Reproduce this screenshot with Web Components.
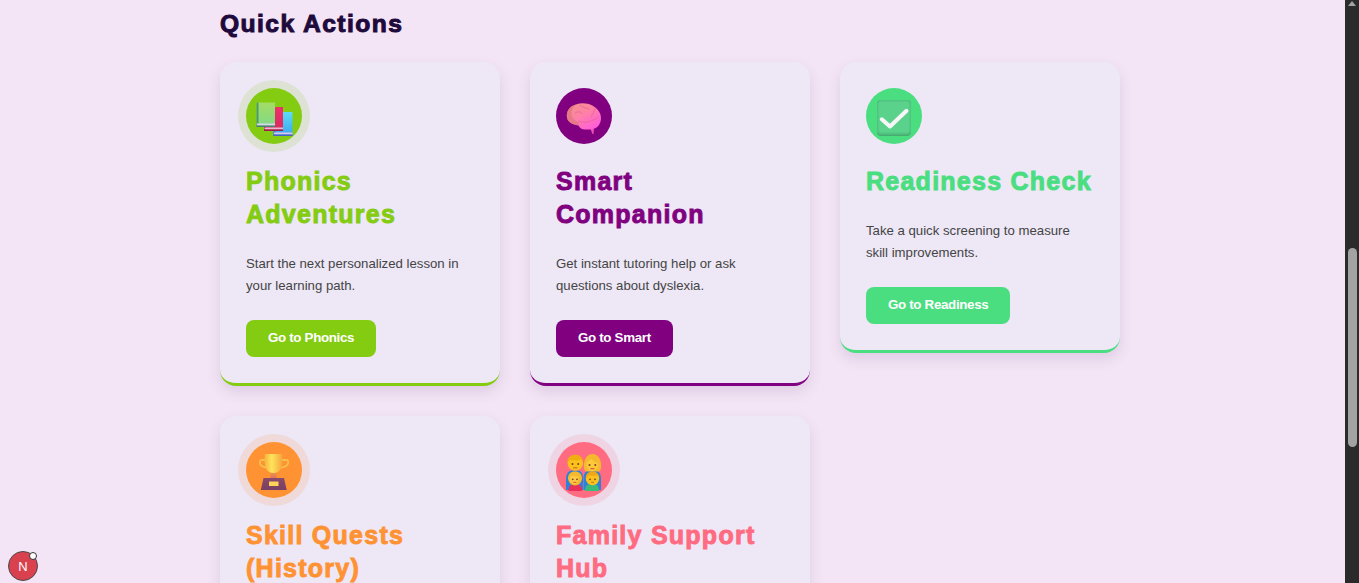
<!DOCTYPE html>
<html lang="en"><head><meta charset="utf-8"><title>Quick Actions</title>
<style>
html,body{margin:0;height:583px;overflow:hidden;background:#f3e5f5;font-family:"Liberation Sans",Arial,sans-serif}
</style></head><body>
<qa-app>
  <qa-section heading="Quick Actions">
    <qa-card color="#84cc12" halo title-text="Phonics Adventures" button="Go to Phonics" desc="Start the next personalized lesson in your learning path.">
      <svg slot="icon" viewBox="0 0 56 56" width="56" height="56">
        <defs>
          <linearGradient id="g1" x1="0" y1="0" x2="0" y2="1"><stop offset="0" stop-color="#a4dc64"/><stop offset="1" stop-color="#7fd98a"/></linearGradient>
          <linearGradient id="g2" x1="0" y1="0" x2="0" y2="1"><stop offset="0" stop-color="#f02f6d"/><stop offset="1" stop-color="#d82a5c"/></linearGradient>
          <linearGradient id="g3" x1="0" y1="0" x2="0" y2="1"><stop offset="0" stop-color="#5bdcf5"/><stop offset="1" stop-color="#3ba4f0"/></linearGradient>
        </defs>
        <rect x="27.500" y="24" width="19" height="24" fill="url(#g3)"/><rect x="27.500" y="24" width="2" height="24" fill="#3f7fd0"/><rect x="28" y="44.500" width="18.500" height="2" fill="#d9c8ee"/><rect x="27.500" y="46.500" width="19" height="1.500" fill="#4a62c0"/>
        <rect x="18" y="19" width="19" height="24" fill="url(#g2)"/><rect x="18" y="19" width="2" height="24" fill="#a82050"/><rect x="18.500" y="39.500" width="18.500" height="2" fill="#e8b8d0"/><rect x="18" y="41.500" width="19" height="1.500" fill="#a01c48"/>
        <rect x="10.500" y="14.500" width="18.500" height="24.500" fill="url(#g1)"/><rect x="10.500" y="14.500" width="2" height="24.500" fill="#4e9a66"/><rect x="11" y="35.500" width="18" height="2" fill="#d8d8ec"/><rect x="10.500" y="37.500" width="18.500" height="1.500" fill="#4c7f72"/>
      </svg>
    </qa-card>
    <qa-card color="#800080" title-text="Smart Companion" button="Go to Smart" desc="Get instant tutoring help or ask questions about dyslexia.">
      <svg slot="icon" viewBox="0 0 56 56" width="56" height="56">
        <defs><linearGradient id="b1" x1=".1" y1=".1" x2=".75" y2="1"><stop offset="0" stop-color="#f5908f"/><stop offset=".45" stop-color="#ff80a8"/><stop offset="1" stop-color="#ff5cdc"/></linearGradient></defs>
        <path d="M34.500 41h3.500l-.6 5.500-1.200-1.300z" fill="#f050b8"/>
        <path d="M10.800 28c0-6.500 4-10 9-11.500 5-1.700 11.500-1.700 16.500 1 5.500 3 8.700 7.500 8.700 12.500 0 6-3.500 10-8 11-2.800 .6-5.500 .5-8 .5-3.500 0-5-1.200-6.500-4-5.500-1-11.700-3.500-11.700-9.500z" fill="url(#b1)"/>
        <path d="M10.800 28c0-6.500 4-10 9-11.500-3 2.500-4.500 6-4.200 9.500 .3 3.700 3 6.500 6.900 8 1 .5-.2 2.200-.2 3.500-5.500-1-11.500-3.500-11.500-9.500z" fill="#e0787f" opacity=".8"/>
        <g fill="none" stroke="#e0608e" stroke-width=".8" stroke-linecap="round" opacity=".75">
          <path d="M24 17.500c3 2.500 6 2 9 3.500M39 20.500c-1 4-3 5.500-3.500 8.500M19 25c3-2 6-1.500 7.500 .5M23 33c4 2 9 1.500 12-.5 3-.5 5-1 7-3.500"/>
        </g>
      </svg>
    </qa-card>
    <qa-card color="#4ade80" title-text="Readiness Check" button="Go to Readiness" desc="Take a quick screening to measure skill improvements.">
      <svg slot="icon" viewBox="0 0 56 56" width="56" height="56">
        <rect x="11" y="12" width="34" height="36" rx="4" fill="#46ac70"/>
        <rect x="11" y="12" width="34" height="34.500" rx="4" fill="#52c481"/>
        <rect x="12.500" y="13.500" width="31" height="31" rx="3" fill="#5bd28b"/>
        <path d="M15.800 31.300L24 38.500 40.500 22.800" fill="none" stroke="#f7f7f7" stroke-width="4" stroke-linecap="round" stroke-linejoin="round"/>
      </svg>
    </qa-card>
    <qa-card color="#ff9233" halo clip title-text="Skill Quests (History)" button="" desc="">
      <svg slot="icon" viewBox="0 0 56 56" width="56" height="56">
        <defs>
          <linearGradient id="t1" x1="0" y1="0" x2="1" y2="0"><stop offset="0" stop-color="#f7b23e"/><stop offset=".4" stop-color="#ffe45c"/><stop offset="1" stop-color="#f5a53c"/></linearGradient>
          <linearGradient id="t2" x1="0" y1="0" x2="0" y2="1"><stop offset="0" stop-color="#f0a63e"/><stop offset="1" stop-color="#e2705a"/></linearGradient>
          <linearGradient id="t3" x1="0" y1="0" x2="0" y2="1"><stop offset="0" stop-color="#8a4a6a"/><stop offset="1" stop-color="#7a3f63"/></linearGradient>
        </defs>
        <path d="M20 18h-3.500c-2.500-.3-3 1.500-2.500 3.500 .6 2.200 3 3.500 6.500 4M35 18h4c2.800-.6 3.600 1 3 3.500-.6 2.200-3 3.500-7 4" fill="none" stroke="#f8c24a" stroke-width="1.800"/>
        <path d="M25 28h5l.8 8.500h-6.600z" fill="url(#t2)"/>
        <path d="M18.800 12h17.400c.6 6 .4 10.500-1 14-1.400 3.300-4.600 5-7.700 5s-6.300-1.700-7.700-5c-1.400-3.500-1.600-8-1-14z" fill="url(#t1)"/>
        <path d="M17.500 36h20.500l2.700 12H14.800z" fill="url(#t3)"/>
        <rect x="23" y="39.500" width="9.500" height="4.500" fill="#ffd25a"/>
      </svg>
    </qa-card>
    <qa-card color="#ff6b81" halo clip title-text="Family Support Hub" button="" desc="">
      <svg slot="icon" viewBox="0 0 56 56" width="56" height="56">
        <path d="M10 48v-11c0-5 2-8 6-8.500h6c3.500 .5 5 3 5 8v11.500z" fill="#2f80d8"/>
        <path d="M27.500 48v-11.500c0-5 2-7.500 5.500-8h6.500c3.500 .5 5.500 3.500 5.500 8.500v11z" fill="#2f80d8"/>
        <circle cx="19.300" cy="21" r="7.800" fill="#fcc21b"/>
        <path d="M11.500 21c-.5-5 3-8.500 8-8.300 4.500 0 8 3.300 7.500 8.300-.8-2-1.500-3-2.500-3.500-3 1-7 1-10 .5-1.500 .5-2.500 1.500-3 3z" fill="#f1ae12"/>
        <circle cx="16.500" cy="22" r="1" fill="#7a4218"/><circle cx="22.200" cy="22" r="1" fill="#7a4218"/>
        <path d="M17.500 25.800h3.600" stroke="#c4622a" stroke-width="1" stroke-linecap="round"/>
        <path d="M28 26c-.8-8 3-14 8.500-14s9.500 6 8.500 14c-.3 3-2.500 4-4 3.500H32c-2 .5-3.700-.8-4-3.500z" fill="#f4b92d"/>
        <path d="M30.500 21.500c1-2 3-4.500 5-4.500 1.300 2.300 4.500 3.500 6.500 4 .4 4.500-2.500 8.500-5.800 8.500s-6-3.800-5.700-8z" fill="#fdc83e"/>
        <circle cx="33.500" cy="23" r="1" fill="#7a4218"/><circle cx="39.300" cy="23" r="1" fill="#7a4218"/>
        <path d="M34.800 26.800h3.300" stroke="#d8432a" stroke-width="1.100" stroke-linecap="round"/>
        <path d="M12.500 49c0-4 1.500-6.500 4-6.500h5.500c2.500 0 4 2.500 4 6.500z" fill="#e8315a"/>
        <path d="M29 49c0-4 1.500-6.500 4-6.500h6c2.500 0 4 2.500 4 6.500z" fill="#3dba7a"/>
        <path d="M12 36c0-3.800 3-6.500 7-6.500s7 2.700 7 6.500-3 7.500-7 7.500-7-3.700-7-7.500z" fill="#f5b92a"/>
        <path d="M14 37c0-2 1.300-3.300 2.800-3.500 1.500 .8 4.200 1.200 5.500 1 1 3-.8 7.500-3.500 7.500s-4.800-2.300-4.800-5z" fill="#fdcb48"/>
        <circle cx="16.700" cy="37.300" r=".9" fill="#7a4218"/><circle cx="21" cy="37.300" r=".9" fill="#7a4218"/>
        <path d="M17.700 40.300h2.300" stroke="#d8432a" stroke-width=".9" stroke-linecap="round"/>
        <circle cx="36.500" cy="36.500" r="6.700" fill="#fcc21b"/>
        <path d="M29.800 36c-.3-4 3-6.500 6.700-6.500s7 2.500 6.700 6.500c-.8-1.500-1.800-2.500-2.800-2.800-2 .7-5 .7-7 .3-1.200.5-2.200 1.300-2.600 2.500z" fill="#eea817"/>
        <circle cx="34" cy="37.300" r=".9" fill="#7a4218"/><circle cx="39" cy="37.300" r=".9" fill="#7a4218"/>
        <path d="M35.400 40.300h2.200" stroke="#c4622a" stroke-width=".9" stroke-linecap="round"/>
      </svg>
    </qa-card>
  </qa-section>
  <qa-scrollbar slot="bar"></qa-scrollbar>
  <qa-devbadge slot="badge"></qa-devbadge>
</qa-app>
<script>
function def(name, css, html, init){
  customElements.define(name, class extends HTMLElement{
    connectedCallback(){
      if(this.shadowRoot) return;
      const r=this.attachShadow({mode:"open"});
      r.innerHTML="<style>"+css+"</style>"+(typeof html==="function"?html(this):html);
      if(init) init(this,r);
    }
  });
}
def("qa-app",
  ":host{display:grid;grid-template-columns:1fr 14px;height:583px;overflow:hidden;position:relative}"+
  ".main{overflow:hidden;min-width:0;padding-left:220px}",
  '<div class="main"><slot></slot></div><slot name="bar"></slot><slot name="badge"></slot>');
def("qa-section",
  ":host{display:block;width:900px}"+
  "h2{margin:0;padding-top:8px;height:32px;font:700 24.6px/32px 'Liberation Sans',Arial,sans-serif;color:#1f0a3c;-webkit-text-stroke:1px #1f0a3c;letter-spacing:1.45px}"+
  ".grid{display:grid;grid-template-columns:repeat(3,280px);gap:30px;margin-top:22px;align-items:start}",
  h=>'<h2>'+h.getAttribute("heading")+'</h2><div class="grid"><slot></slot></div>');
def("qa-card",
  ":host{display:block;box-sizing:border-box;background:#ede7f6;border-radius:16px;padding:26px;border-bottom:3px solid var(--c);box-shadow:0 6px 14px rgba(90,40,120,.13)}"+
  ":host([clip]){border-bottom:0;padding-bottom:120px}"+
  ".icon{width:56px;height:56px;border-radius:50%;background:var(--c);display:block;margin-bottom:21px;overflow:hidden}"+
  ":host([halo]) .icon{box-shadow:0 0 0 8px var(--h)}"+
  "::slotted(svg){display:block}"+
  "h3{margin:0 0 -1px;font:700 25px/33px 'Liberation Sans',Arial,sans-serif;color:var(--c);-webkit-text-stroke:.9px var(--c);letter-spacing:1.25px}"+
  "p{margin:23px 0 23px;font:400 13.2px/22px 'Liberation Sans',Arial,sans-serif;color:#444}"+
  "button{display:block;border:0;border-radius:8px;background:var(--c);color:#fff;font:700 13.33px/35px 'Liberation Sans',Arial,sans-serif;letter-spacing:-.32px;height:37px;padding:0 22px 3px;margin:0}",
  h=>{
    const d=h.getAttribute("desc"),b=h.getAttribute("button");
    return '<div class="icon"><slot name="icon"></slot></div><h3>'+h.getAttribute("title-text")+'</h3>'+
      (d?'<p>'+d+'</p>':'')+(b?'<button>'+b+'</button>':'');
  },
  h=>{
    const c=h.getAttribute("color");
    h.style.setProperty("--c",c);
    h.style.setProperty("--h",c+"26");
  });
def("qa-scrollbar",
  ":host{display:block;background:#2b2b2b;position:relative;height:583px}"+
  ".up{width:0;height:0;margin:1px auto 0;border-left:4.500px solid transparent;border-right:4.500px solid transparent;border-bottom:5px solid #a3a3a3}"+
  ".thumb{position:absolute;left:3px;right:2px;top:248px;height:199px;border-radius:5px;background:#a3a3a3}",
  '<div class="up"></div><div class="thumb"></div>');
def("qa-devbadge",
  ":host{position:absolute;left:8px;top:551px;width:30px;height:30px;box-sizing:border-box;border-radius:50%;background:#d9414f;border:1.500px solid #4a4a4a;display:flex;align-items:center;justify-content:center;color:#fff;font:400 13px 'Liberation Sans',sans-serif}"+
  "i{position:absolute;right:0;top:0;width:6px;height:6px;border-radius:50%;background:#fff;border:1px solid #333}",
  'N<i></i>');
</script>
</body></html>
